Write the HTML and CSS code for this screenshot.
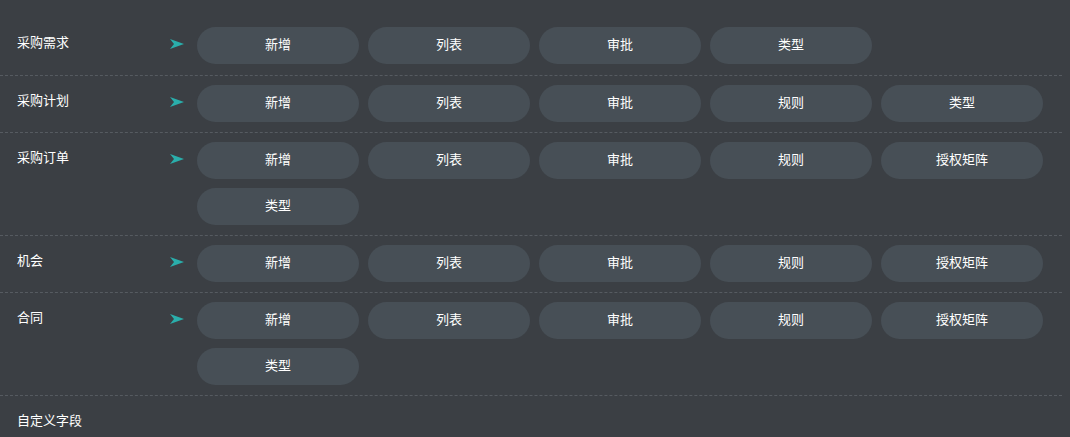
FILE: index.html
```html
<!DOCTYPE html>
<html lang="zh">
<head>
<meta charset="utf-8">
<link rel="stylesheet" href="styles.css">
</head>
<body>
<div class="list">
  <div class="row first">
    <div class="label">采购需求</div>
    <svg class="arrow" viewBox="0 0 14 10"><path d="M0 0 L14 5 L0 10 L4 5 Z"/></svg>
    <div class="btns">
      <span class="btn">新增</span><span class="btn">列表</span><span class="btn">审批</span><span class="btn">类型</span>
    </div>
  </div>
  <div class="row">
    <div class="label">采购计划</div>
    <svg class="arrow" viewBox="0 0 14 10"><path d="M0 0 L14 5 L0 10 L4 5 Z"/></svg>
    <div class="btns">
      <span class="btn">新增</span><span class="btn">列表</span><span class="btn">审批</span><span class="btn">规则</span><span class="btn">类型</span>
    </div>
  </div>
  <div class="row">
    <div class="label">采购订单</div>
    <svg class="arrow" viewBox="0 0 14 10"><path d="M0 0 L14 5 L0 10 L4 5 Z"/></svg>
    <div class="btns">
      <span class="btn">新增</span><span class="btn">列表</span><span class="btn">审批</span><span class="btn">规则</span><span class="btn">授权矩阵</span><span class="btn">类型</span>
    </div>
  </div>
  <div class="row">
    <div class="label">机会</div>
    <svg class="arrow" viewBox="0 0 14 10"><path d="M0 0 L14 5 L0 10 L4 5 Z"/></svg>
    <div class="btns">
      <span class="btn">新增</span><span class="btn">列表</span><span class="btn">审批</span><span class="btn">规则</span><span class="btn">授权矩阵</span>
    </div>
  </div>
  <div class="row">
    <div class="label">合同</div>
    <svg class="arrow" viewBox="0 0 14 10"><path d="M0 0 L14 5 L0 10 L4 5 Z"/></svg>
    <div class="btns">
      <span class="btn">新增</span><span class="btn">列表</span><span class="btn">审批</span><span class="btn">规则</span><span class="btn">授权矩阵</span><span class="btn">类型</span>
    </div>
  </div>
  <div class="row last">
    <div class="label">自定义字段</div>
  </div>
</div>
</body>
</html>
```

FILE: styles.css
```css
html, body {
  margin: 0;
  padding: 0;
  background: #3b3f44;
  height: 100%;
  overflow: hidden;
}

body {
  font-family: "Noto Sans CJK SC", "Noto Sans", sans-serif;
  font-size: 13px;
  color: #ffffff;
}

.list {
  padding-top: 18px;
  margin-right: 8px;
}

.row {
  display: flex;
  align-items: flex-start;
  padding: 9px 0 10px 17px;
  border-bottom: 1px dashed #565b61;
}

.row.first {
  padding-bottom: 11px;
}

.row.last {
  border-bottom: none;
}

.label {
  width: 153px;
  flex: none;
  line-height: 20px;
  padding-top: 5px;
}

.arrow {
  width: 14px;
  height: 10px;
  flex: none;
  margin-top: 12px;
  margin-right: 13px;
  fill: #2aaeab;
}

.btns {
  display: flex;
  flex-wrap: wrap;
  gap: 9px 9px;
  width: 846px;
}

.btn {
  width: 162px;
  height: 37px;
  border-radius: 19px;
  background: #474f56;
  display: flex;
  align-items: center;
  justify-content: center;
  line-height: 20px;
  padding-bottom: 4px;
  box-sizing: border-box;
}
```
